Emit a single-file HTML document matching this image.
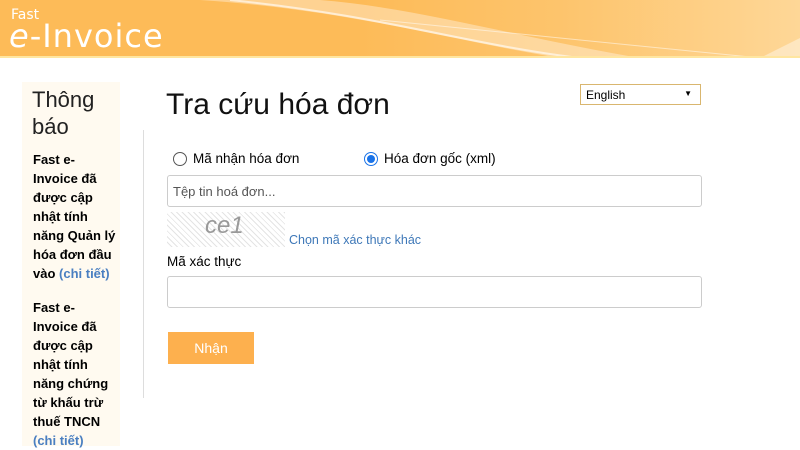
<!DOCTYPE html>
<html><head><meta charset="utf-8"><style>
*{margin:0;padding:0;box-sizing:border-box}
body{width:800px;height:446px;overflow:hidden;background:#fff;font-family:"Liberation Sans",sans-serif;position:relative;color:#000}
.hdr{position:absolute;left:0;top:0;width:800px;height:58px;background:linear-gradient(90deg,#fdbb58 0%,#fdbb58 45%,#fdc46c 70%,#fed797 100%);border-bottom:2px solid #ffe6a0;overflow:hidden}
.a{position:absolute;white-space:nowrap}
.sb{left:22px;top:82px;width:98px;height:364px;background:#fffaf0}
.bt{font-weight:bold;font-size:13px;line-height:19px;left:33px}
.lk{color:#4a7fc1}
.inp{position:absolute;left:167px;width:535px;height:32px;border:1px solid #ccc;border-radius:3px;background:#fff}
</style></head><body>
<div class="hdr">
<svg width="800" height="58" style="position:absolute;left:0;top:0">
<path d="M200 0 C350 10 450 40 560 58 L640 58 C520 38 420 8 320 0Z" fill="#fff" opacity=".35"/>
<path d="M230 0 C380 15 470 45 580 58" stroke="#fff" stroke-width="2" fill="none" opacity=".6"/>
<path d="M380 20 C520 35 640 45 760 58" stroke="#fff" stroke-width="1" fill="none" opacity=".5"/>
<path d="M760 58 L800 38 L800 58Z" fill="#fff" opacity=".4"/>
</svg>
<div class="a" style="left:11px;top:7px;color:#fff;font-size:14px;font-family:'DejaVu Sans',sans-serif">Fast</div>
<div class="a" style="left:9px;top:17px;color:#fff;font-size:32px;font-family:'DejaVu Sans',sans-serif;letter-spacing:1px"><i>e</i>-Invoice</div>
</div>
<div class="a sb"></div>
<div class="a" style="left:32px;top:86px;font-size:22px;line-height:27px;color:#222">Thông<br>báo</div>
<div class="a bt" style="top:150px">Fast e-<br>Invoice đã<br>được cập<br>nhật tính<br>năng Quản lý<br>hóa đơn đầu<br>vào <span class="lk">(chi tiết)</span></div>
<div class="a bt" style="top:298px">Fast e-<br>Invoice đã<br>được cập<br>nhật tính<br>năng chứng<br>từ khấu trừ<br>thuế TNCN<br><span class="lk">(chi tiết)</span></div>
<div class="a" style="left:143px;top:130px;width:1px;height:268px;background:#ddd"></div>
<div class="a" style="left:166px;top:88px;font-size:30px;color:#111">Tra cứu hóa đơn</div>
<div class="a" style="left:580px;top:84px;width:121px;height:21px;border:1px solid #d9b66f;font-size:12px;padding:3px 5px">English<span style="position:absolute;right:8px;top:4px;font-size:8px">▼</span></div>
<div class="a" style="left:173px;top:152px;width:14px;height:14px;border:1px solid #555;border-radius:50%"></div>
<div class="a" style="left:193px;top:151px;font-size:13.5px">Mã nhận hóa đơn</div>
<div class="a" style="left:364px;top:152px;width:14px;height:14px;border:1.5px solid #1a73e8;border-radius:50%"><div style="margin:2px;width:8px;height:8px;border-radius:50%;background:#1a73e8"></div></div>
<div class="a" style="left:384px;top:151px;font-size:13.5px">Hóa đơn gốc (xml)</div>
<div class="inp" style="top:175px"><span style="position:absolute;left:5px;top:8px;font-size:13px;color:#555">Tệp tin hoá đơn...</span></div>
<div class="a" style="left:167px;top:212px;width:118px;height:35px;background:repeating-linear-gradient(45deg,#fff 0 3px,#e4e4e4 3px 4px),#fff"></div>
<div class="a" style="left:205px;top:212px;font-size:24px;color:#999;font-style:italic">ce1</div>
<div class="a" style="left:289px;top:233px;font-size:12.5px;color:#3e78b8">Chọn mã xác thực khác</div>
<div class="a" style="left:167px;top:254px;font-size:13.5px">Mã xác thực</div>
<div class="inp" style="top:276px"></div>
<div class="a" style="left:168px;top:332px;width:86px;height:32px;background:#fdb04e;color:#fff;font-size:14px;text-align:center;line-height:32px">Nhận</div>
</body></html>
